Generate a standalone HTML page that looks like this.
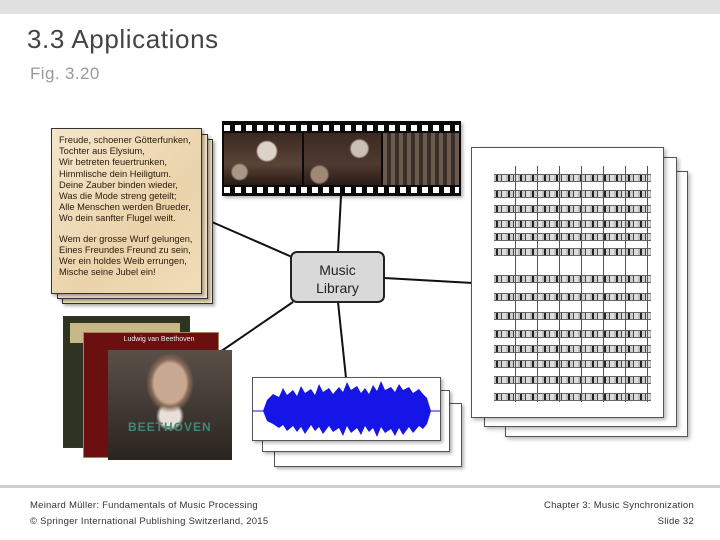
<!DOCTYPE html>
<html><head><meta charset="utf-8"><style>
*{margin:0;padding:0;box-sizing:border-box}
body{width:720px;height:540px;background:#fff;position:relative;overflow:hidden;font-family:"Liberation Sans",sans-serif}
.a{position:absolute}
.pg{position:absolute;background:#f1e2c4;border:1px solid #333;box-shadow:2px 2px 3px rgba(0,0,0,.35)}
.sc{position:absolute;background:#fff;border:1px solid #555;box-shadow:2px 2px 4px rgba(0,0,0,.3)}
.wv{position:absolute;background:#fff;border:1px solid #555;box-shadow:2px 2px 3px rgba(0,0,0,.3)}
.staff{position:absolute;left:22px;right:12px;height:8px;border-top:1px solid #666;border-bottom:1px solid #666;background:repeating-linear-gradient(90deg,#bbb 0 2px,#222 2px 4px,#ccc 4px 7px,#444 7px 8px,#ddd 8px 12px)}
.ft{position:absolute;font-size:9.5px;color:#333;letter-spacing:.25px}
</style></head><body>
<div class="a" style="left:0;top:0;width:720px;height:14px;background:#e1e1e1"></div>
<div class="a" style="left:27px;top:24px;font-size:26px;color:#444;letter-spacing:.6px">3.3 Applications</div>
<div class="a" style="left:30px;top:64px;font-size:17px;color:#999;letter-spacing:.4px">Fig. 3.20</div>

<svg class="a" style="left:0;top:0" width="720" height="540">
<g stroke="#111" stroke-width="2" fill="none">
<line x1="212" y1="222" x2="292" y2="257"/>
<line x1="341" y1="196" x2="338" y2="252"/>
<line x1="384" y1="278" x2="473" y2="283"/>
<line x1="293" y1="302" x2="220" y2="352"/>
<line x1="338" y1="302" x2="346" y2="378"/>
</g></svg>

<div class="pg" style="left:62px;top:139px;width:151px;height:165px"></div>
<div class="pg" style="left:57px;top:134px;width:151px;height:165px"></div>
<div class="pg" style="left:51px;top:128px;width:151px;height:166px;background:linear-gradient(135deg,#f4e6cb,#ead3ab 60%,#f0ddb8);padding:6px 0 0 7px;font-size:9.3px;line-height:11.2px;color:#2a1a0a;white-space:nowrap">
Freude, schoener Götterfunken,<br>Tochter aus Elysium,<br>Wir betreten feuertrunken,<br>Himmlische dein Heiligtum.<br>Deine Zauber binden wieder,<br>Was die Mode streng geteilt;<br>Alle Menschen werden Brueder,<br>Wo dein sanfter Flugel weilt.<div style="height:9px"></div>Wem der grosse Wurf gelungen,<br>Eines Freundes Freund zu sein,<br>Wer ein holdes Weib errungen,<br>Mische seine Jubel ein!
</div>

<div class="a" style="left:222px;top:121px;width:239px;height:75px;background:#0a0a0a;box-shadow:2px 2px 3px rgba(0,0,0,.3)">
<div class="a" style="left:2px;top:4px;width:235px;height:6px;background:repeating-linear-gradient(90deg,#fff 0 6px,transparent 6px 11px)"></div>
<div class="a" style="left:2px;top:66px;width:235px;height:6px;background:repeating-linear-gradient(90deg,#fff 0 6px,transparent 6px 11px)"></div>
<div class="a" style="left:2px;top:12px;width:78px;height:52px;background:radial-gradient(circle at 55% 35%,#ddd2c8 0 9px,transparent 11px),radial-gradient(circle at 20% 75%,#a89888 0 7px,transparent 9px),linear-gradient(#3a2820,#5a4438 60%,#2a1a14)"></div>
<div class="a" style="left:82px;top:12px;width:77px;height:52px;background:radial-gradient(circle at 72% 30%,#ccc0b4 0 8px,transparent 10px),radial-gradient(circle at 20% 80%,#a08878 0 8px,transparent 10px),linear-gradient(#3c2a22,#4e3a30 60%,#2a1c16)"></div>
<div class="a" style="left:161px;top:12px;width:76px;height:52px;background:repeating-linear-gradient(90deg,#6a5a50 0 4px,#3a2c26 4px 8px)"></div>
</div>

<div class="a" style="left:290px;top:251px;width:95px;height:52px;background:#d9d9d9;border:2px solid #222;border-radius:7px;text-align:center;font-size:14px;line-height:18px;padding-top:8px;color:#222">Music<br>Library</div>

<div class="sc" style="left:505px;top:171px;width:183px;height:266px"></div>
<div class="sc" style="left:484px;top:157px;width:193px;height:270px"></div>
<div class="sc" style="left:471px;top:147px;width:193px;height:271px">
<div class="staff" style="top:26px"></div><div class="staff" style="top:42px"></div><div class="staff" style="top:57px"></div>
<div class="staff" style="top:72px"></div><div class="staff" style="top:85px"></div><div class="staff" style="top:100px"></div>
<div class="staff" style="top:127px"></div><div class="staff" style="top:145px"></div><div class="staff" style="top:164px"></div>
<div class="staff" style="top:182px"></div><div class="staff" style="top:197px"></div><div class="staff" style="top:212px"></div><div class="staff" style="top:228px"></div><div class="staff" style="top:245px"></div>
<div class="a" style="left:22px;top:18px;width:159px;height:236px;background:repeating-linear-gradient(90deg,transparent 0 21px,#555 21px 22px)"></div>
</div>

<div class="a" style="left:63px;top:316px;width:127px;height:132px;background:#2e3322;border:1px solid #333"><div class="a" style="left:6px;top:6px;width:110px;height:20px;background:#c8b888"></div></div>
<div class="a" style="left:83px;top:332px;width:136px;height:126px;background:#6a1010;border:1px solid #a08858"></div>
<div class="a" style="left:108px;top:350px;width:124px;height:110px;background:radial-gradient(ellipse at 50% 30%,#c8a890 0 16px,#8a6a58 19px,transparent 24px),radial-gradient(ellipse at 50% 60%,#e8e0d8 0 10px,transparent 14px),linear-gradient(#5a5048,#2a2420)"></div>
<div class="a" style="left:104px;top:336px;width:110px;font-size:7px;color:#eee;text-align:center">Ludwig van Beethoven</div>
<div class="a" style="left:128px;top:420px;font-size:12px;font-weight:bold;color:#3a8a7a;letter-spacing:1px">BEETHOVEN</div>

<div class="wv" style="left:274px;top:403px;width:188px;height:64px"></div>
<div class="wv" style="left:262px;top:390px;width:188px;height:62px"></div>
<div class="wv" style="left:252px;top:377px;width:189px;height:64px">
<svg width="187" height="62"><line x1="0" y1="33" x2="187" y2="33" stroke="#1010e0"/>
<polygon fill="#1515e8" points="10,33 14,22 20,16 26,19 30,10 34,17 40,12 44,18 48,8 52,15 58,11 62,17 66,6 70,14 76,10 80,16 86,9 90,14 94,4 98,12 104,8 108,15 112,10 116,16 120,7 124,13 128,3 132,12 138,9 142,14 146,6 150,12 156,9 160,15 166,11 170,16 174,20 178,33 174,46 170,51 166,48 160,55 156,49 150,57 146,50 142,58 138,51 132,55 128,49 124,59 120,50 116,54 112,48 108,57 104,50 98,55 94,48 90,58 86,50 80,54 76,48 70,56 66,49 62,53 58,47 52,56 48,49 44,54 40,48 34,53 30,47 26,50 20,46 14,43"/></svg>
</div>

<div class="a" style="left:0;top:485px;width:720px;height:3px;background:#cfcfcf"></div>
<div class="ft" style="left:30px;top:500px">Meinard Müller: Fundamentals of Music Processing</div>
<div class="ft" style="left:30px;top:516px">© Springer International  Publishing Switzerland, 2015</div>
<div class="ft" style="left:480px;top:500px;width:214px;text-align:right">Chapter 3: Music Synchronization</div>
<div class="ft" style="left:600px;top:516px;width:94px;text-align:right">Slide  32</div>
</body></html>
